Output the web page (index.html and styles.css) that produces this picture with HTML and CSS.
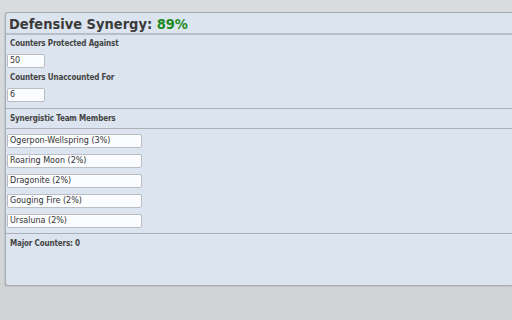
FILE: index.html
```html
<!DOCTYPE html>
<html>
<head>
<meta charset="utf-8">
<link rel="stylesheet" href="styles.css">
</head>
<body>
<div class="panel">
  <h1 class="title">Defensive Synergy: <span class="pct">89%</span></h1>
  <div class="section">
    <div class="label">Counters Protected Against</div>
    <div class="field small">50</div>
    <div class="label">Counters Unaccounted For</div>
    <div class="field small">6</div>
  </div>
  <div class="subhead">Synergistic Team Members</div>
  <div class="list">
    <div class="field wide">Ogerpon-Wellspring (3%)</div>
    <div class="field wide">Roaring Moon (2%)</div>
    <div class="field wide">Dragonite (2%)</div>
    <div class="field wide">Gouging Fire (2%)</div>
    <div class="field wide">Ursaluna (2%)</div>
  </div>
  <div class="footer">Major Counters: 0</div>
</div>
</body>
</html>
```

FILE: styles.css
```css
html, body {
  margin: 0;
  padding: 0;
}
body {
  width: 512px;
  height: 320px;
  overflow: hidden;
  background: linear-gradient(180deg, #d9dcde 0%, #d3d7d9 60%, #d0d4d5 100%);
  font-family: "DejaVu Sans", Verdana, sans-serif;
  color: #3c3c3c;
}
.panel {
  margin: 12px 0 0 5px;
  height: 272px;
  background: #dce5ef;
  border: 1px solid #a7adb3;
  border-right: none;
  border-radius: 3px 0 0 3px;
  box-shadow: -1px 1px 1px rgba(0,0,0,0.08);
  display: flex;
  flex-direction: column;
}
.title {
  margin: 0;
  padding: 1px 0 0 3px;
  height: 19px;
  font-family: "DejaVu Sans Condensed", "DejaVu Sans", sans-serif;
  font-size: 14.5px;
  font-weight: bold;
  color: #3a3a3a;
  border-bottom: 2px solid #b7bfc8;
  line-height: 20px;
}
.pct {
  color: #1e8a1e;
}
.section {
  padding: 3px 0 6px 1px;
  display: flex;
  flex-direction: column;
  align-items: flex-start;
  border-bottom: 1px solid #a9b0b6;
}
.label, .subhead, .footer {
  font-family: "DejaVu Sans Condensed", "DejaVu Sans", sans-serif;
  font-size: 8px;
  letter-spacing: -0.15px;
  font-weight: bold;
  color: #444;
  line-height: 12px;
}
.label {
  padding-left: 3px;
  height: 12px;
  margin-bottom: 4px;
}
.field {
  box-sizing: border-box;
  background: #fbfcfe;
  border: 1px solid #b9bec4;
  border-radius: 2px;
  height: 14px;
  font-size: 8px;
  line-height: 12px;
  padding-left: 2px;
  color: #333;
  font-family: "DejaVu Sans", Verdana, sans-serif;
}
.section .field {
  margin-bottom: 4px;
}
.section .field:last-child {
  margin-bottom: 0;
}
.small {
  width: 38px;
}
.wide {
  width: 135px;
}
.subhead {
  padding: 4px 0 0 4px;
  height: 15px;
  border-bottom: 1px solid #a9b0b6;
}
.list {
  padding: 5px 0 5px 1px;
  display: flex;
  flex-direction: column;
  gap: 6px;
  border-bottom: 1px solid #a9b0b6;
}
.footer {
  padding: 4px 0 0 4px;
}
```
